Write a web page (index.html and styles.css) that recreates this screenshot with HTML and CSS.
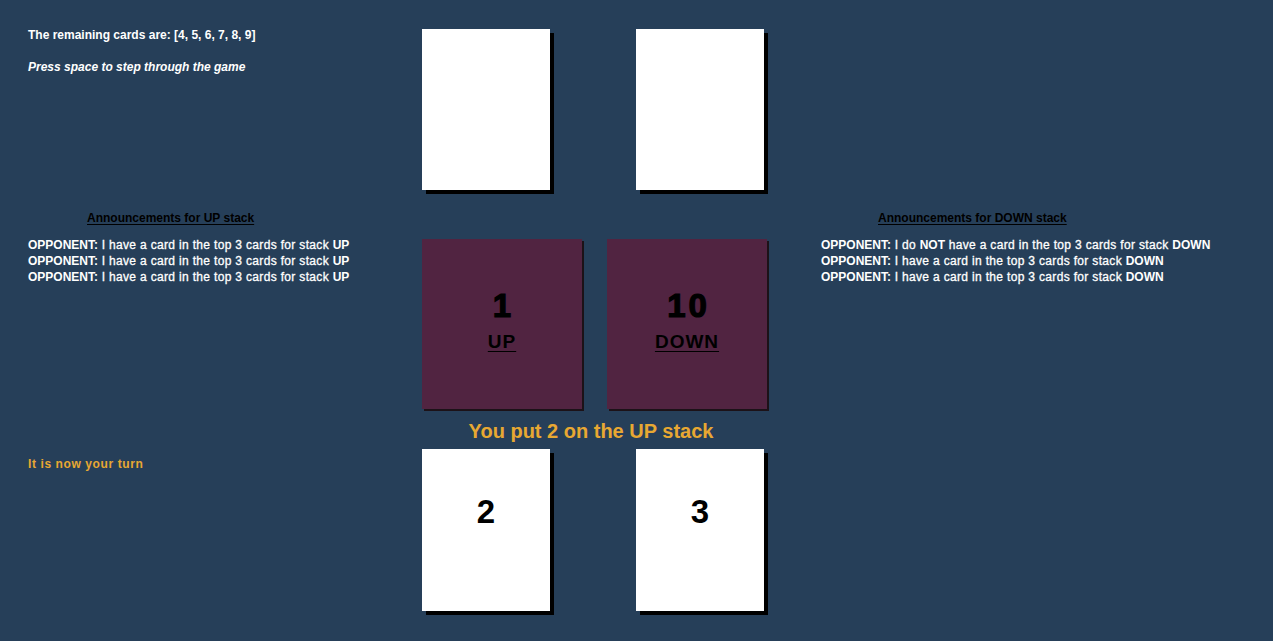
FILE: index.html
```html
<!DOCTYPE html>
<html>
<head>
<meta charset="utf-8">
<link rel="stylesheet" href="styles.css">
</head>
<body>
<div class="board">
  <div class="left r1">
    <p class="info">The remaining cards are: [4, 5, 6, 7, 8, 9]</p>
    <p class="info hint">Press space to step through the game</p>
  </div>
  <div class="center r1">
    <div class="cards">
      <div class="card"></div>
      <div class="card"></div>
    </div>
  </div>
  <div class="right r1"></div>

  <div class="left r2">
    <h3 class="ann-title">Announcements for UP stack</h3>
    <ul class="ann">
      <li><b>OPPONENT:</b> I have a card in the top 3 cards for stack <b>UP</b></li>
      <li><b>OPPONENT:</b> I have a card in the top 3 cards for stack <b>UP</b></li>
      <li><b>OPPONENT:</b> I have a card in the top 3 cards for stack <b>UP</b></li>
    </ul>
  </div>
  <div class="center r2">
    <div class="stacks">
      <div class="stack"><span class="num">1</span><span class="label">UP</span></div>
      <div class="stack"><span class="num">10</span><span class="label">DOWN</span></div>
    </div>
  </div>
  <div class="right r2">
    <h3 class="ann-title ann-title-r">Announcements for DOWN stack</h3>
    <ul class="ann">
      <li><b>OPPONENT:</b> I do <b>NOT</b> have a card in the top 3 cards for stack <b>DOWN</b></li>
      <li><b>OPPONENT:</b> I have a card in the top 3 cards for stack <b>DOWN</b></li>
      <li><b>OPPONENT:</b> I have a card in the top 3 cards for stack <b>DOWN</b></li>
    </ul>
  </div>

  <div class="left r3">
    <p class="turn">It is now your turn</p>
  </div>
  <div class="center r3">
    <p class="message">You put 2 on the UP stack</p>
    <div class="cards">
      <div class="card card-hand"><span class="card-num">2</span></div>
      <div class="card card-hand"><span class="card-num">3</span></div>
    </div>
  </div>
  <div class="right r3"></div>
</div>
</body>
</html>
```

FILE: styles.css
```css
html, body {
  margin: 0;
  padding: 0;
  height: 100%;
}

body {
  background: #263f59;
  font-family: "Liberation Sans", Arial, sans-serif;
  color: #ffffff;
  overflow: hidden;
}

.board {
  display: grid;
  grid-template-columns: 394px 399px 1fr;
  padding: 29px 0 0 28px;
}

.info {
  margin: 0 0 18px 0;
  font-size: 12px;
  line-height: 14px;
  font-weight: bold;
}

.info.hint {
  font-style: italic;
}

.r1.left {
  margin-top: -1px;
}

.cards {
  display: flex;
  gap: 86px;
}

.card {
  width: 128px;
  height: 161px;
  background: #ffffff;
  box-shadow: 4px 4px 0 #000000;
  display: flex;
  justify-content: center;
  align-items: flex-start;
}

.card-hand {
  height: 162px;
}

.card-num {
  padding-top: 45px;
  font-size: 33px;
  line-height: 36px;
  font-weight: bold;
  color: #000000;
}

.r2.left,
.r2.right {
  padding-top: 21px;
}

.ann-title {
  margin: 0 0 12px 59px;
  font-size: 12px;
  line-height: 14px;
  font-weight: bold;
  color: #000000;
  text-decoration: underline;
  text-underline-offset: 2px;
}

.ann-title-r {
  margin-left: 57px;
}

.ann {
  list-style: none;
  margin: 0;
  padding: 0;
  font-size: 12px;
  line-height: 16px;
  font-weight: normal;
  letter-spacing: 0.33px;
  -webkit-text-stroke: 0.3px #ffffff;
}

.ann b {
  font-weight: bold;
  letter-spacing: 0;
  -webkit-text-stroke: 0;
}

.r2.center {
  padding-top: 49px;
}

.stacks {
  display: flex;
  gap: 25px;
}

.stack {
  width: 160px;
  height: 170px;
  background: #512441;
  box-shadow: 2px 2px 0 #1c1218;
  display: flex;
  flex-direction: column;
  align-items: center;
  justify-content: center;
  gap: 6px;
  padding-bottom: 6px;
  box-sizing: border-box;
  color: #000000;
}

.num {
  font-size: 33px;
  line-height: 36px;
  font-weight: bold;
  letter-spacing: 3px;
  padding-left: 3px;
  -webkit-text-stroke: 1.2px #000000;
}

.label {
  font-size: 19px;
  line-height: 24px;
  font-weight: bold;
  letter-spacing: 1px;
  text-decoration: underline;
  text-underline-offset: 3px;
}

.turn {
  margin: 48px 0 0 0;
  font-size: 12px;
  line-height: 14px;
  font-weight: bold;
  letter-spacing: 0.6px;
  color: #e8a832;
}

.message {
  margin: 10px 0 6px 0;
  width: 338px;
  text-align: center;
  font-size: 20px;
  line-height: 24px;
  font-weight: bold;
  color: #e8a832;
}
```
